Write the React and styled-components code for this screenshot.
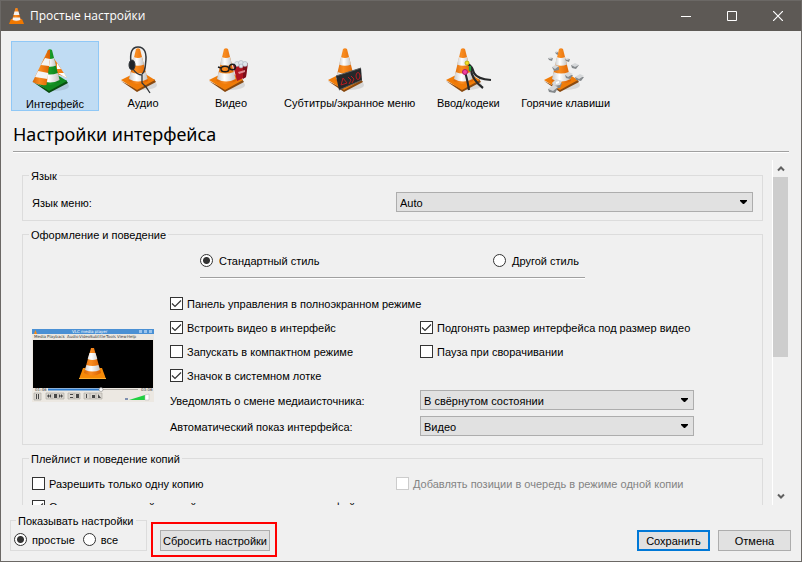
import React, { useState } from 'react'
import styled, { createGlobalStyle } from 'styled-components'

const GlobalStyle = createGlobalStyle`
    * {
        box-sizing: border-box;
    }

    body {
        margin: 0;
        padding: 0;
        background: #f0f0f0;
    }

    body, button, select, input {
        font-family: 'Liberation Sans', Tahoma, sans-serif;
        font-size: 11px;
        line-height: 14px;
        color: #000000;
    }
`

const Window = styled.div`
    display: flex;
    flex-direction: column;
    height: 100vh;
    background: #f0f0f0;
    border: 1px solid #6b6865;
`

const TitleBar = styled.header`
    display: flex;
    align-items: center;
    height: 30px;
    flex-shrink: 0;
    padding-left: 8px;
    background: #5d5955;
`

const WindowTitle = styled.h1`
    flex: 1;
    margin: 0 0 0 6px;
    font-family: 'Open Sans', 'Noto Sans', sans-serif;
    font-size: 12px;
    font-weight: 400;
    line-height: 16px;
    color: #ffffff;
`

const WindowButton = styled.button`
    display: flex;
    align-items: center;
    justify-content: center;
    width: 46px;
    height: 30px;
    padding: 0;
    border: none;
    background: transparent;
    cursor: pointer;

    &:hover {
        background: #78746f;
    }
`

const Toolbar = styled.nav`
    display: flex;
    padding: 10px 10px 0;
    flex-shrink: 0;
`

const Tab = styled.button`
    display: flex;
    flex-direction: column;
    align-items: center;
    min-width: 88px;
    height: 70px;
    padding: ${(props) => (props.$active ? '5px' : '4px')} 8px 0;
    border: 1px solid ${(props) => (props.$active ? '#90c8f6' : 'transparent')};
    background: ${(props) => (props.$active ? '#c0dcf3' : 'transparent')};
    line-height: 18px;
    white-space: nowrap;
    cursor: pointer;
`

const Heading = styled.h2`
    margin: 10px 12px 0;
    padding-bottom: 4px;
    font-family: 'Noto Sans', 'Open Sans', sans-serif;
    font-size: 18px;
    font-weight: 400;
    line-height: 26px;
    border-bottom: 1px solid #a0a0a0;
    box-shadow: 0 1px 0 #ffffff;
`

const ScrollArea = styled.main`
    display: flex;
    flex: 1;
    min-height: 0;
    margin: 8px 12px 0;
`

const ScrollContent = styled.div`
    display: flex;
    flex-direction: column;
    flex: 1;
    gap: 6px;
    min-width: 0;
    padding: 8px 9px 0;
    overflow: hidden;

    & > * {
        flex-shrink: 0;
    }
`

const ScrollBar = styled.div`
    display: flex;
    flex-direction: column;
    width: 17px;
    border-left: 1px solid #ffffff;
`

const ScrollButton = styled.button`
    display: flex;
    align-items: center;
    justify-content: center;
    height: 17px;
    padding: 0;
    border: none;
    background: transparent;
`

const ScrollTrack = styled.div`
    flex: 1;
`

const ScrollThumb = styled.div`
    width: 15px;
    height: 58%;
    background: #cdcdcd;
`

const Group = styled.fieldset`
    min-width: 0;
    margin: 0;
    padding: ${(props) => props.$padding || '10px 9px 8px'};
    border: 1px solid #dcdcdc;
`

const Legend = styled.legend`
    height: 14px;
    margin-left: ${(props) => (props.$small ? '2px' : '-3px')};
    padding: 0 2px;
    line-height: 16px;
    white-space: nowrap;
`

const Columns = styled.div`
    display: grid;
    grid-template-columns: 1fr 1fr;
    column-gap: 7px;
    align-items: center;
`

const Stack = styled.div`
    display: flex;
    flex-direction: column;
    gap: 6px;
`

const Select = styled.select`
    width: 100%;
    height: 20px;
    padding: 1px 3px 0;
    border: 1px solid #adadad;
    border-radius: 0;
    appearance: none;
    background: #e1e1e1
        url("data:image/svg+xml,%3Csvg xmlns='http://www.w3.org/2000/svg' width='7' height='4'%3E%3Cpath d='M0 0h7v1L4 4H3L0 1z'/%3E%3C/svg%3E")
        no-repeat right 5px top 7px;
`

const StyleRow = styled.div`
    display: grid;
    grid-template-columns: 293px 1fr;
    width: 385px;
    margin: 0 auto;
    padding: 1px 0 8px;
    border-bottom: 1px solid #a0a0a0;
    box-shadow: 0 1px 0 #ffffff;
`

const OptionLabel = styled.label`
    display: flex;
    align-items: center;
    height: 17px;
    gap: ${(props) => props.$gap || '4px'};
    white-space: nowrap;
    color: ${(props) => (props.$disabled ? '#838383' : '#000000')};
`

const Caption = styled.span`
    padding-top: 2px;
    line-height: 15px;
`

const Check = styled.input`
    flex-shrink: 0;
    width: 13px;
    height: 13px;
    margin: 0;
    border: 1px solid #333333;
    appearance: none;
    background: #ffffff;

    &:checked {
        background: #ffffff
            url("data:image/svg+xml,%3Csvg xmlns='http://www.w3.org/2000/svg' width='11' height='11'%3E%3Cpath d='M1 5.5L4 8.5L10 2.5' fill='none' stroke='%23333' stroke-width='1.2'/%3E%3C/svg%3E")
            no-repeat center;
    }

    &:disabled {
        border-color: #cccccc;
    }
`

const Radio = styled.input`
    flex-shrink: 0;
    width: 13px;
    height: 13px;
    margin: 0;
    border: 1px solid #333333;
    border-radius: 50%;
    appearance: none;
    background: #ffffff;

    &:checked {
        background: radial-gradient(circle, #333333 3px, #ffffff 4px);
    }
`

const FieldLabel = styled.label`
    padding-top: 2px;
`

const Appearance = styled.div`
    display: grid;
    grid-template-columns: 122px minmax(0, 1fr);
    column-gap: 16px;
    align-items: center;
    padding: 17px 59px 0 0;
`

const OptionGrid = styled.div`
    display: grid;
    grid-template-columns: 250px minmax(0, 1fr);
    row-gap: 7px;
`

const WideCell = styled.div`
    grid-column: 1 / -1;
`

const SelectGrid = styled.div`
    display: grid;
    grid-template-columns: 250px minmax(0, 1fr);
    row-gap: 6px;
    align-items: center;
    margin-top: 6px;
`

const Footer = styled.footer`
    display: flex;
    align-items: flex-end;
    flex-shrink: 0;
    padding: 8px 10px 4px 9px;
`

const ModeRow = styled.div`
    display: flex;
    gap: 8px;
`

const ModeBox = styled.div`
    width: 137px;
    margin: 0 4px 6px 0;
`

const ResetFrame = styled.div`
    padding: 6px 5px 4px 7px;
    border: 2px solid #ff0000;
`

const Button = styled.button`
    min-width: 73px;
    height: 21px;
    padding: 1px 3px 0;
    border: ${(props) => (props.$primary ? '2px solid #0078d7' : '1px solid #adadad')};
    background: #e1e1e1;
    white-space: nowrap;
    cursor: pointer;
`

const ResetButton = styled(Button)`
    display: block;
    width: 110px;
    padding: 1px 0 0;
`

const Actions = styled.div`
    display: flex;
    gap: 8px;
    margin: 0 0 6px auto;
`

const Gradients = () => (
    <svg width="0" height="0" style={{ position: 'absolute' }} aria-hidden="true">
        <defs>
            <linearGradient id="orange">
                <stop offset="0" stopColor="#d86808" />
                <stop offset="0.4" stopColor="#f98c20" />
                <stop offset="1" stopColor="#d96000" />
            </linearGradient>
            <linearGradient id="white">
                <stop offset="0" stopColor="#cccccc" />
                <stop offset="0.4" stopColor="#ffffff" />
                <stop offset="1" stopColor="#c4c4c4" />
            </linearGradient>
            <linearGradient id="green">
                <stop offset="0" stopColor="#0a6a14" />
                <stop offset="0.5" stopColor="#189c28" />
                <stop offset="1" stopColor="#0a7a18" />
            </linearGradient>
        </defs>
    </svg>
)

const Cone = ({ color = 'orange' }) => (
    <g>
        <path d="M2 35L18 46L37 36L35 33L18 43Z" fill={color === 'green' ? '#0a4d10' : '#8a4a10'} />
        <path d="M2 34L10 30L28 29L36 34L18 44Z" fill={color === 'green' ? '#118a20' : '#f07c08'} />
        <path d="M17 3Q19 1.500 21 3L29 35Q19 41 9.500 35Z" fill={`url(#${color})`} />
        <path d="M14.900 11Q19 13 23 11L25 18.500Q19 21 13 18.500Z" fill="url(#white)" />
        <path d="M11.500 26Q19 29 26.800 26L28.600 33Q19 38 10 33Z" fill="url(#white)" />
    </g>
)

// drawn behind the cone
const backdrops = {
    interface: (
        <g>
            <path d="M21 9L27 17L36 31L32 29L26 27Z" fill="#f07f18" />
            <path d="M26 16L30 22L26 22ZM27 26L33 26L36 31L32 29Z" fill="#ffffff" />
        </g>
    ),
}

const extras = {
    interface: (
        <g>
            <path d="M17 3L19 3L19 12L15.500 38Q8 39 1.500 35Z" fill="url(#orange)" />
            <path d="M14 11L19 12L18 19L10 18Z" fill="#f4f4f4" />
            <path d="M7 24L17.300 26L16.500 32L4 30Z" fill="#f4f4f4" />
        </g>
    ),
    audio: (
        <g fill="none" stroke="#303438">
            <path d="M12 17Q10 1 19 1Q29 1 26.500 18Q26 26 23 28" strokeWidth="1.500" />
            <path d="M14 23Q18 29 23 29L23 37L27 41L31 47" strokeWidth="1.300" />
            <ellipse cx="13" cy="19" rx="3" ry="5" fill="#202428" />
        </g>
    ),
    video: (
        <g>
            <path d="M26 19L40 17L39 31L30 35Z" fill="#b01420" />
            <path d="M36 19L41 17L39 31L36 33Z" fill="#7e0c18" />
            <path d="M31 26L38 24V26L32 28Z" fill="#e08890" />
            <g fill="#dfe6ec" stroke="#9aa6b2" strokeWidth="0.500">
                <circle cx="30" cy="18" r="2.500" />
                <circle cx="34" cy="17" r="2.500" />
                <circle cx="38" cy="18" r="2.500" />
                <circle cx="34" cy="20" r="2" />
            </g>
            <g fill="none" stroke="#1c1c1c" strokeWidth="1.400">
                <ellipse cx="18" cy="23" rx="4" ry="2.800" />
                <ellipse cx="25.500" cy="21" rx="3" ry="2.800" />
                <path d="M14 22L11 21" />
            </g>
        </g>
    ),
    subtitles: (
        <g>
            <path d="M10 30L35 22L36 34L13 44Z" fill="#26282a" />
            <path d="M10 30L35 22M13 44L36 34" stroke="#5c5c5c" />
            <g fill="none" stroke="#b81c20">
                <path d="M15 39L17 32L21 37ZM22 31L25 34L23 38M25 30L28 33L26 37" />
                <ellipse cx="32" cy="30" rx="2" ry="3.500" />
            </g>
        </g>
    ),
    codecs: (
        <g fill="none" stroke="#27292b" strokeWidth="2.200">
            <path d="M24 18Q28 20 30 27Q33 33 47 34" />
            <path d="M27 22Q27 33 39 42" />
            <path d="M21 26Q23 32 25 44" />
            <circle cx="23" cy="17" r="2" fill="#f4e020" stroke="#c0b010" strokeWidth="1" />
            <circle cx="21" cy="26" r="2.500" fill="#f040a0" stroke="#b01868" strokeWidth="1" />
            <path d="M26 20L26 25" stroke="#20a040" />
        </g>
    ),
    hotkeys: (
        <g>
            <g fill="#85898c">
                <path d="M6 12L11 12L10 15L7 14ZM13 6L16 6V9L14 8ZM23 13L28 13L27 16L24 15Z" />
                <path d="M10 21L17 21V24L12 25ZM29 19L37 19L34 23L30 22ZM23 29L31 29L28 33L24 32Z" />
                <path d="M33 31L42 31L39 35L34 34ZM10 37L20 37L18 42L11 42ZM6 43L16 42L13 47L7 46Z" />
            </g>
            <g fill="#d6d8da">
                <path d="M6 12L9 11L11 12L8 13ZM13 6L15 5L16 6L14 7ZM23 13L26 12L28 13L25 14Z" />
                <path d="M10 21L13 19L17 20L13 23ZM29 19L33 17L37 19L33 21ZM23 29L27 26L31 28L26 31Z" />
                <path d="M33 31L38 28L42 30L37 33ZM10 37L14 33L20 35L18 39L12 40ZM6 43L11 39L16 41L11 45Z" />
            </g>
            <path d="M14 36L17 35L17 37L14 38Z" fill="#ffffff" />
        </g>
    ),
}

const TabIcon = ({ name }) => (
    <svg width="48" height="48" viewBox="0 0 48 48" style={{ flexShrink: 0 }} aria-hidden="true">
        <ellipse cx="24" cy="39" rx="14" ry="5" fill="#000000" opacity="0.100" />
        {backdrops[name]}
        <Cone color={name === 'interface' ? 'green' : 'orange'} />
        {extras[name]}
    </svg>
)

const AppIcon = () => (
    <svg width="15" height="16" viewBox="0 0 15 16" aria-hidden="true">
        <path d="M2 11H13L15 16H0Z" fill="#f07800" />
        <path d="M6.500 0H8.500L12 12Q7.500 15 3 12Z" fill="url(#orange)" />
        <path d="M5.500 3.500H9.500L10.400 7H4.600ZM4 9.500H11L11.500 12Q7.500 13.500 3.500 12Z" fill="#f2f2f2" />
    </svg>
)

const Preview = () => (
    <svg width="122" height="73" viewBox="0 0 122 73" role="img" aria-label="VLC media player">
        <rect width="122" height="73" fill="#ece8e2" />
        <rect width="122" height="5" fill="#4a90d4" />
        <path d="M2 5L3.500 1L5 5Z" fill="#ff8a10" />
        <path d="M107 1h3v3h-3zM112 1h3v3h-3zM117 1h3v3h-3z" fill="#9cc4ec" />
        <g fontFamily="DejaVu Sans, sans-serif" fontSize="4">
            <text x="40" y="4" fill="#ffffff">VLC media player</text>
            <g fill="#404040">
                <text x="2" y="9">Media</text>
                <text x="15" y="9">Playback</text>
                <text x="35" y="9">Audio</text>
                <text x="47" y="9">Video</text>
                <text x="58" y="9">Subtitle</text>
                <text x="74" y="9">Tools</text>
                <text x="85" y="9">View</text>
                <text x="95" y="9">Help</text>
                <text x="3" y="62">01:46</text>
                <text x="109" y="62">03:06</text>
            </g>
        </g>
        <rect x="1" y="11" width="120" height="48" fill="#000000" />
        <path d="M51 39H70L74 50H47Z" fill="#f58a08" />
        <path d="M47 49H74V50H47Z" fill="#ffb030" />
        <path d="M59 19H62L69 44Q60.500 49 52 44Z" fill="url(#orange)" />
        <path d="M57.500 24H63.500L65.300 30Q60.500 32 55.700 30ZM54.500 36Q60.500 38 66.500 36L68 41Q60.500 44 53 41Z" fill="url(#white)" />
        <path d="M16 60.500H68" stroke="#2c7cd0" strokeWidth="2" />
        <path d="M68 60.500H106" stroke="#b4b0aa" />
        <circle cx="69" cy="60.500" r="2" fill="#ffffff" stroke="#777777" strokeWidth="0.500" />
        <g fill="#dcd8d2" stroke="#a8a49e" strokeWidth="0.600">
            <path d="M2 64h7v7H2zM14 64h18v6H14zM36 64h12v6H36zM52 64h18v6H52zM20 64v6M26 64v6M42 64v6M58 64v6M64 64v6" />
        </g>
        <g fill="#484848">
            <path d="M4 65h1v5H4zM6 65h1v5H6zM15 67l2-2v4zM17 67l2-2v4zM22 65h3v4h-3zM31 67l-2-2v4zM29 67l-2-2v4z" />
            <path d="M38 65h3v1h-3zM38 68h3v1h-3zM44 65h3v4h-3zM54 65h1v4h-1zM60 66h3v3h-3zM66 65l3 4h-3z" />
        </g>
        <path d="M97 71L113 66V71Z" fill="#20d040" />
        <path d="M113 66L117 65V71H113Z" fill="#ffffff" stroke="#b0b0b0" strokeWidth="0.500" />
        <path d="M93 69h3v2h-3z" fill="#8090b0" />
    </svg>
)

const Chevron = ({ down }) => (
    <svg width="8" height="7" viewBox="0 0 8 7" aria-hidden="true">
        <path d={down ? 'M1 1.500L4 4.500L7 1.500' : 'M1 5.500L4 2.500L7 5.500'} fill="none" stroke="#606060" strokeWidth="2" />
    </svg>
)

const CheckOption = ({ label, checked, disabled }) => (
    <OptionLabel $disabled={disabled}>
        <Check type="checkbox" defaultChecked={checked} disabled={disabled} />
        <Caption>{label}</Caption>
    </OptionLabel>
)

const RadioOption = ({ label, name, checked, gap }) => (
    <OptionLabel $gap={gap}>
        <Radio type="radio" name={name} defaultChecked={checked} />
        <Caption>{label}</Caption>
    </OptionLabel>
)

const tabs = [
    { id: 'interface', label: 'Интерфейс' },
    { id: 'audio', label: 'Аудио' },
    { id: 'video', label: 'Видео' },
    { id: 'subtitles', label: 'Субтитры/экранное меню' },
    { id: 'codecs', label: 'Ввод/кодеки' },
    { id: 'hotkeys', label: 'Горячие клавиши' },
]

const App = () => {
    const [active, setActive] = useState('interface')

    return (
        <>
            <GlobalStyle />
            <Gradients />
            <Window>
                <TitleBar>
                    <AppIcon />
                    <WindowTitle>Простые настройки</WindowTitle>
                    <WindowButton aria-label="Свернуть">
                        <svg width="10" height="10"><path d="M0 5.500H10" stroke="#ffffff" /></svg>
                    </WindowButton>
                    <WindowButton aria-label="Развернуть">
                        <svg width="10" height="10"><path d="M0.500 0.500H9.500V9.500H0.500Z" fill="none" stroke="#ffffff" /></svg>
                    </WindowButton>
                    <WindowButton aria-label="Закрыть">
                        <svg width="10" height="10"><path d="M0 0L10 10M10 0L0 10" stroke="#ffffff" strokeWidth="1.200" /></svg>
                    </WindowButton>
                </TitleBar>

                <Toolbar>
                    {tabs.map((tab) => (
                        <Tab key={tab.id} $active={tab.id === active} onClick={() => setActive(tab.id)}>
                            <TabIcon name={tab.id} />
                            {tab.label}
                        </Tab>
                    ))}
                </Toolbar>
                <Heading>Настройки интерфейса</Heading>

                <ScrollArea>
                    <ScrollContent>
                        <Group>
                            <Legend>Язык</Legend>
                            <Columns>
                                <FieldLabel htmlFor="language">Язык меню:</FieldLabel>
                                <Select id="language">
                                    <option>Auto</option>
                                </Select>
                            </Columns>
                        </Group>

                        <Group>
                            <Legend>Оформление и поведение</Legend>
                            <StyleRow>
                                <RadioOption name="style" label="Стандартный стиль" gap="6px" checked />
                                <RadioOption name="style" label="Другой стиль" gap="6px" />
                            </StyleRow>
                            <Appearance>
                                <Preview />
                                <div>
                                    <OptionGrid>
                                        <WideCell>
                                            <CheckOption label="Панель управления в полноэкранном режиме" checked />
                                        </WideCell>
                                        <CheckOption label="Встроить видео в интерфейс" checked />
                                        <CheckOption label="Подгонять размер интерфейса под размер видео" checked />
                                        <CheckOption label="Запускать в компактном режиме" />
                                        <CheckOption label="Пауза при сворачивании" />
                                        <CheckOption label="Значок в системном лотке" checked />
                                    </OptionGrid>
                                    <SelectGrid>
                                        <FieldLabel htmlFor="notify">Уведомлять о смене медиаисточника:</FieldLabel>
                                        <Select id="notify">
                                            <option>В свёрнутом состоянии</option>
                                        </Select>
                                        <FieldLabel htmlFor="raise">Автоматический показ интерфейса:</FieldLabel>
                                        <Select id="raise">
                                            <option>Видео</option>
                                        </Select>
                                    </SelectGrid>
                                </div>
                            </Appearance>
                        </Group>

                        <Group>
                            <Legend>Плейлист и поведение копий</Legend>
                            <Stack>
                                <Columns>
                                    <CheckOption label="Разрешить только одну копию" />
                                    <CheckOption label="Добавлять позиции в очередь в режиме одной копии" disabled />
                                </Columns>
                                <CheckOption label="Открывать основной единый экземпляр при запуске из файла" checked />
                            </Stack>
                        </Group>
                    </ScrollContent>
                    <ScrollBar>
                        <ScrollButton aria-label="Вверх"><Chevron /></ScrollButton>
                        <ScrollTrack>
                            <ScrollThumb />
                        </ScrollTrack>
                        <ScrollButton aria-label="Вниз"><Chevron down /></ScrollButton>
                    </ScrollBar>
                </ScrollArea>

                <Footer>
                    <ModeBox>
                        <Group $padding="4px 3px 2px">
                            <Legend $small>Показывать настройки</Legend>
                            <ModeRow>
                                <RadioOption name="mode" label="простые" gap="5px" checked />
                                <RadioOption name="mode" label="все" gap="5px" />
                            </ModeRow>
                        </Group>
                    </ModeBox>
                    <ResetFrame>
                        <ResetButton>Сбросить настройки</ResetButton>
                    </ResetFrame>
                    <Actions>
                        <Button $primary>Сохранить</Button>
                        <Button>Отмена</Button>
                    </Actions>
                </Footer>
            </Window>
        </>
    )
}

export default App
